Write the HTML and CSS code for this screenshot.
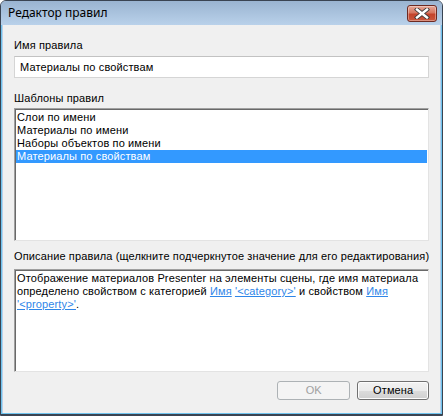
FILE: index.html
```html
<!DOCTYPE html>
<html>
<head>
<meta charset="utf-8">
<link rel="stylesheet" href="styles.css">
</head>
<body>
<div class="window">
  <div class="titlebar">
    <span class="title">Редактор правил</span>
    <div class="close">
      <svg width="16" height="11" viewBox="0 0 16 11">
        <path d="M3 1.5 L13 9.5 M13 1.5 L3 9.5" stroke="#3c3c3c" stroke-width="4.2" stroke-linecap="square"/>
        <path d="M3 1.5 L13 9.5 M13 1.5 L3 9.5" stroke="#ffffff" stroke-width="2.4" stroke-linecap="square"/>
      </svg>
    </div>
  </div>
  <div class="frame">
    <div class="content">
      <div class="label">Имя правила</div>
      <div class="textbox">Материалы по свойствам</div>
      <div class="label label-list">Шаблоны правил</div>
      <div class="listbox">
        <div class="item">Слои по имени</div>
        <div class="item">Материалы по имени</div>
        <div class="item">Наборы объектов по имени</div>
        <div class="item selected">Материалы по свойствам</div>
      </div>
      <div class="label label-desc">Описание правила (щелкните подчеркнутое значение для его редактирования)</div>
      <div class="descbox">Отображение материалов Presenter на элементы сцены, где имя материала определено свойством с категорией <span class="link">Имя</span> <span class="link">'&lt;category&gt;'</span> и свойством <span class="link">Имя</span> <span class="link">'&lt;property&gt;'</span>.</div>
      <div class="buttons">
        <div class="btn disabled">OK</div>
        <div class="btn">Отмена</div>
      </div>
    </div>
  </div>
</div>
</body>
</html>
```

FILE: styles.css
```css
html, body {
  margin: 0;
  padding: 0;
  background: #ffffff;
}
body {
  width: 443px;
  height: 416px;
  overflow: hidden;
}
.window {
  box-sizing: border-box;
  width: 443px;
  height: 416px;
  border: 1px solid #3a4452;
  border-radius: 6px 6px 0 0;
  background: #b9d1ea;
  display: flex;
  flex-direction: column;
  overflow: hidden;
}
.titlebar {
  height: 24px;
  flex: none;
  background: linear-gradient(#9ab4d1, #b9d1ea);
  display: flex;
  align-items: flex-start;
  justify-content: space-between;
  padding: 0 5px 0 7px;
}
.title {
  font-family: "Noto Sans", "Open Sans", sans-serif;
  font-size: 12px;
  line-height: 12px;
  color: #000;
  margin-top: 6px;
}
.close {
  box-sizing: border-box;
  margin-top: 4px;
  width: 30px;
  height: 17px;
  border: 1px solid #6d2a22;
  border-radius: 3px;
  background: linear-gradient(#e6a797 0%, #d67660 45%, #c4432b 55%, #c9573d 100%);
  box-shadow: inset 0 0 0 1px rgba(255,255,255,0.35);
  display: flex;
  align-items: center;
  justify-content: center;
}
.close svg { display: block; }
.frame {
  flex: 1;
  display: flex;
  padding: 0 1px 2px 1px;
  background: #6fc3ee;
  box-shadow: inset 0 -1px 0 #3a4452;
}
.content {
  flex: 1;
  background: #f0f0f0;
  border-left: 1px solid #b9d1ea;
  border-right: 1px solid #b9d1ea;
  padding: 14px 11px 0 11px;
  display: flex;
  flex-direction: column;
  font-family: "Liberation Sans", Arial, sans-serif;
  font-size: 11px;
  letter-spacing: 0.13px;
  color: #000;
}
.label {
  line-height: 13px;
  height: 13px;
  white-space: nowrap;
  padding-left: 0;
}
.textbox {
  box-sizing: border-box;
  margin-top: 4px;
  height: 22px;
  border: 1px solid #d5d5d5;
  border-top-color: #c2c2c2;
  background: #fff;
  padding-left: 5px;
  line-height: 20px;
}
.label-list {
  margin-top: 14px;
}
.listbox {
  box-sizing: border-box;
  margin-top: 3px;
  height: 133px;
  background: #fff;
  border: 1px solid;
  border-color: #a0a0a0 #e3e3e3 #e3e3e3 #a0a0a0;
  box-shadow: inset 1px 1px 0 #696969;
  padding: 2px 1px 0 1px;
}
.item {
  height: 13px;
  line-height: 13px;
  padding-left: 1px;
  white-space: nowrap;
}
.item.selected {
  background: #3399ff;
  color: #fff;
}
.label-desc {
  margin-top: 9px;
}
.descbox {
  box-sizing: border-box;
  margin-top: 6px;
  height: 103px;
  background: #fff;
  border: 1px solid;
  border-color: #a0a0a0 #e3e3e3 #e3e3e3 #a0a0a0;
  box-shadow: inset 1px 1px 0 #696969;
  padding: 2px 4px 0 2px;
  line-height: 13px;
}
.link {
  color: #2f86e8;
  text-decoration: underline;
}
.buttons {
  display: flex;
  justify-content: flex-end;
  gap: 7px;
  margin-top: 9px;
}
.btn {
  box-sizing: border-box;
  width: 72px;
  height: 19px;
  border: 1px solid #707070;
  border-radius: 3px;
  background: linear-gradient(#f2f2f2 0%, #ebebeb 50%, #dddddd 50%, #cfcfcf 100%);
  box-shadow: inset 0 0 0 1px #fcfcfc;
  text-align: center;
  line-height: 17px;
  color: #000;
}
.btn.disabled {
  width: 73px;
  border-color: #adb2b5;
  background: #f4f4f4;
  box-shadow: none;
  color: #a0a0a0;
}
```
